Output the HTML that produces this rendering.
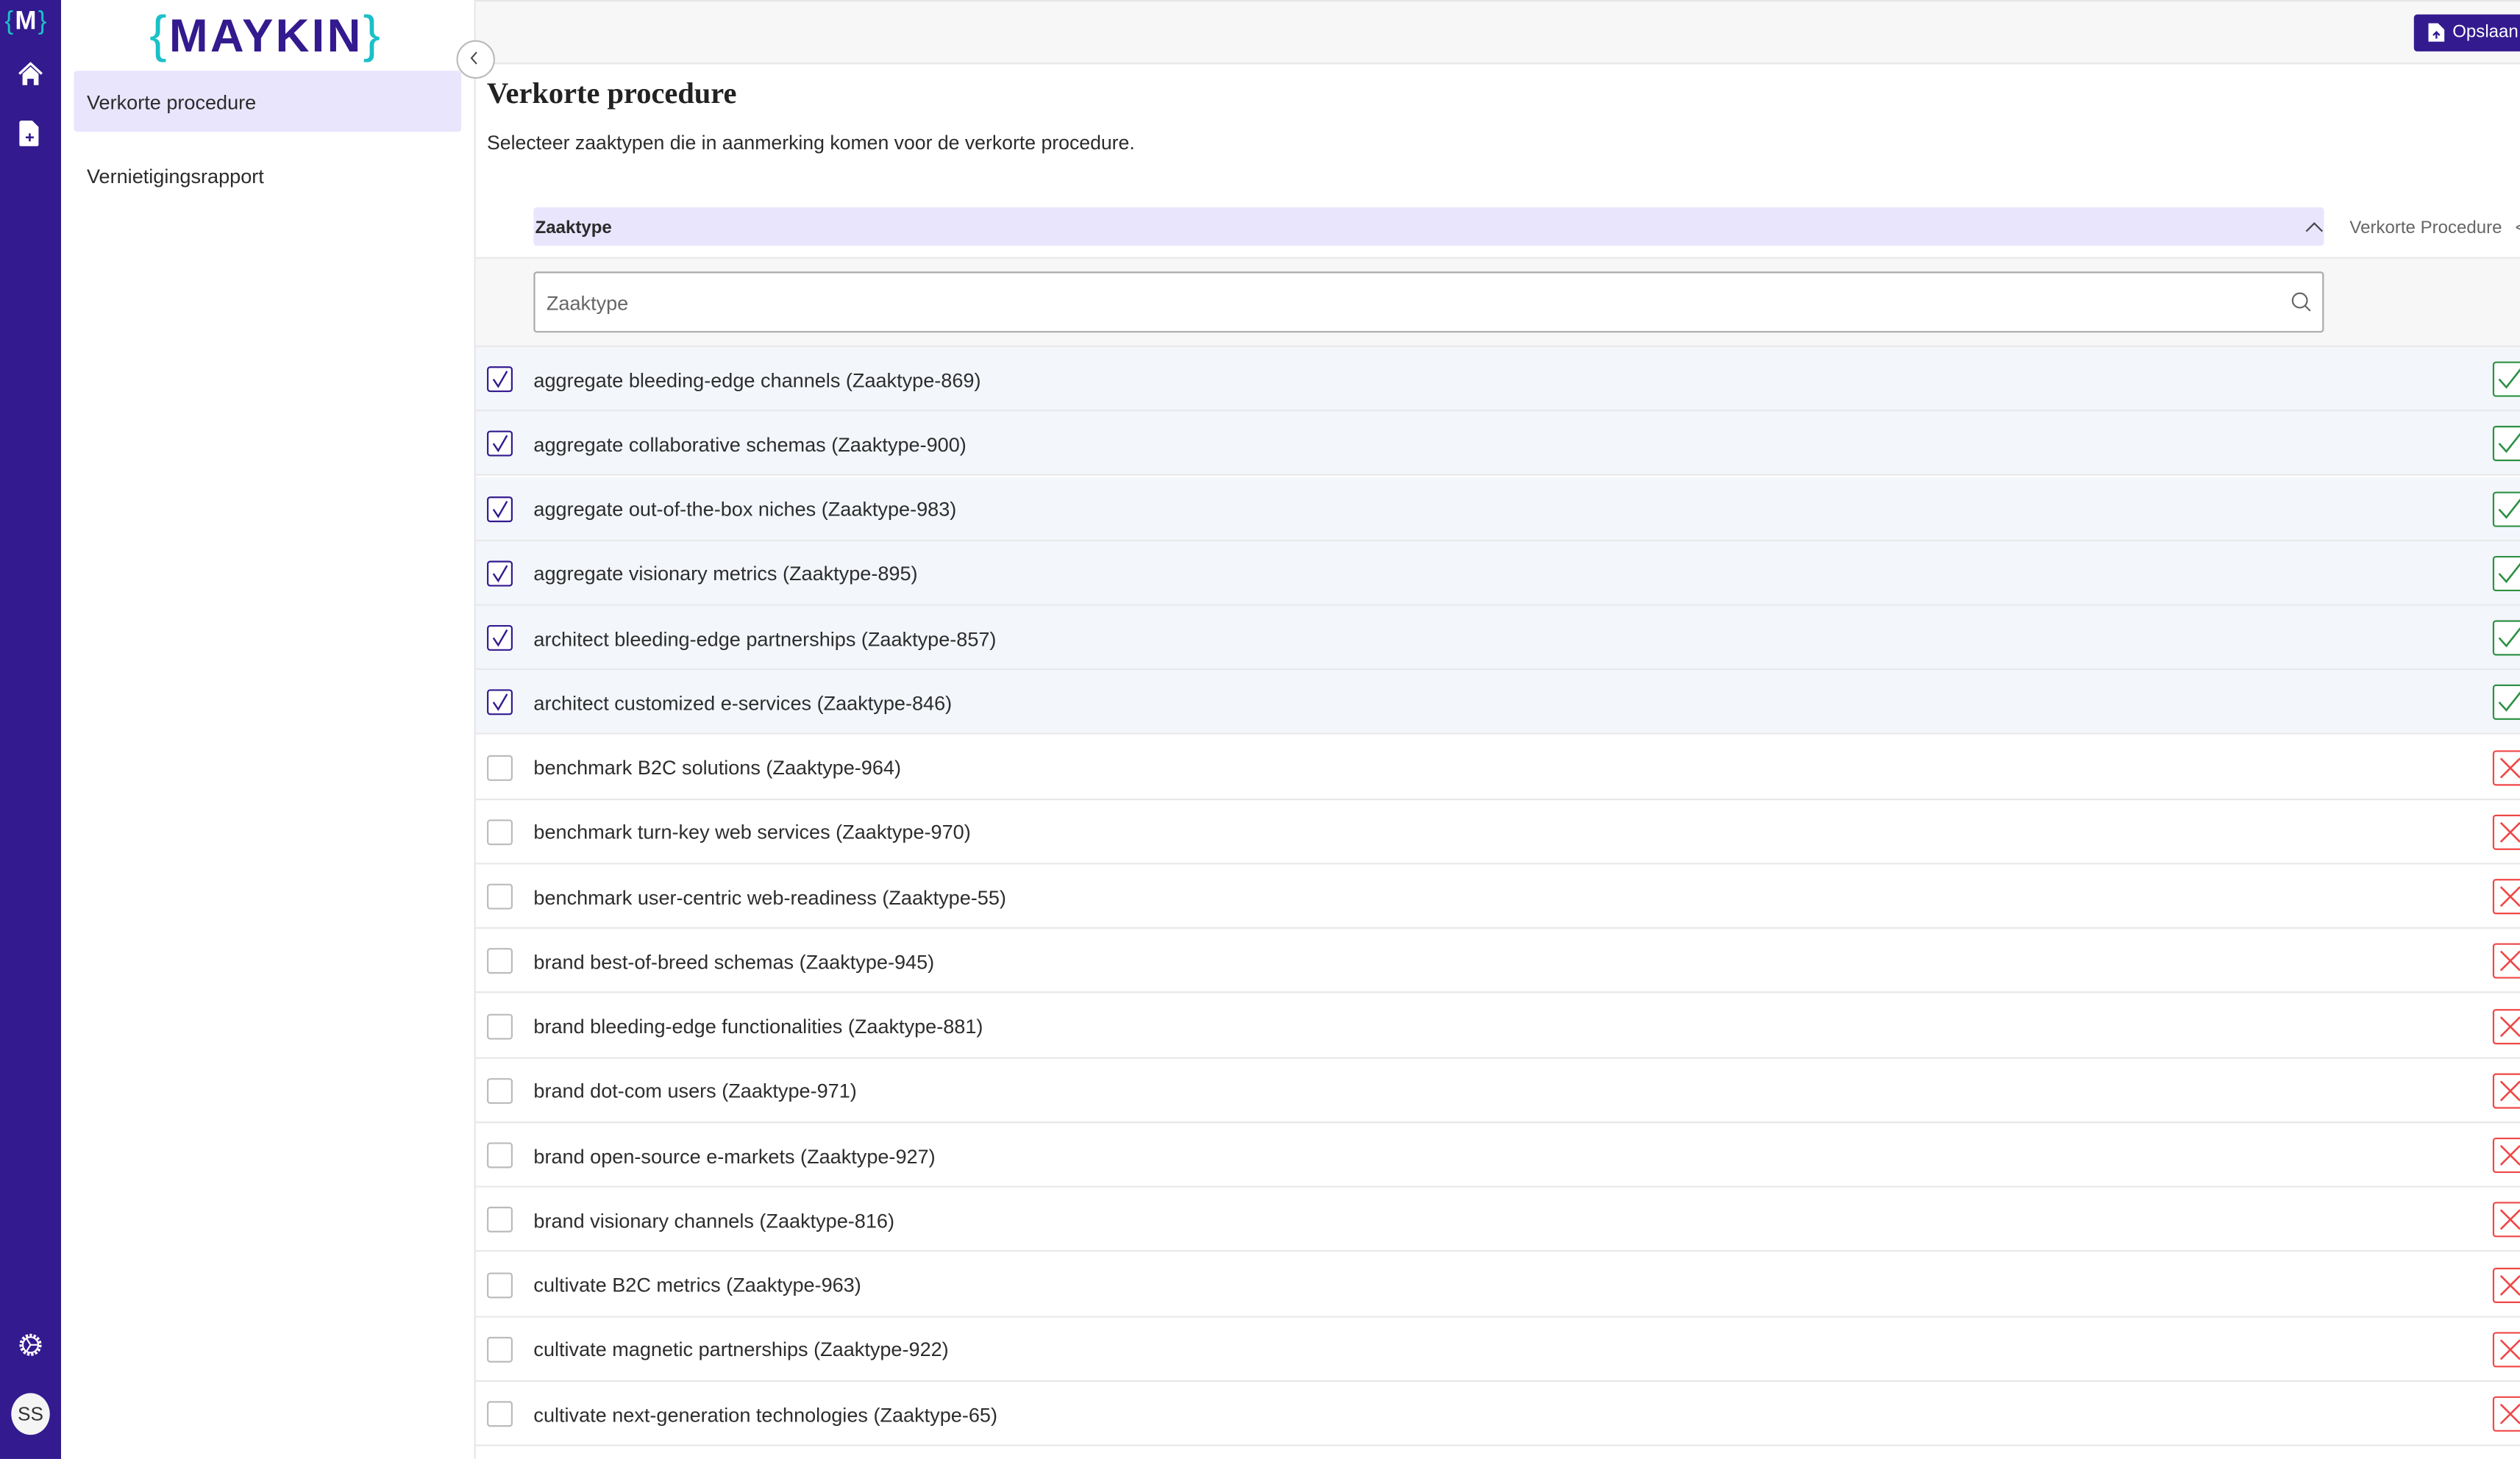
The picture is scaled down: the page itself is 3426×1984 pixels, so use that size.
<!DOCTYPE html>
<html><head><meta charset="utf-8"><style>
*{box-sizing:border-box;margin:0;padding:0}
html,body{width:3426px;height:1984px;overflow:hidden;background:#fff}
#w{position:absolute;left:0;top:0;width:1568px;height:908px;transform:scale(2.18495);transform-origin:0 0;font-family:"Liberation Sans",sans-serif;color:#2b2b2b}
.abs{position:absolute}
#nav{left:0;top:0;width:38px;height:908px;background:#331a8e}
#side{left:38px;top:0;width:257px;height:908px;background:#fff}
#main{left:295px;top:0;width:1273px;height:908px;border-left:1px solid #e6e6e6}
.row{position:absolute;left:0;width:1273px;height:40.2px;border-bottom:1px solid #e8e8e8}
.row.sel{background:#f3f6fb}
.cb{position:absolute;left:7px;top:12px;width:16px;height:16px;border:1px solid #bbb;border-radius:2px;background:#fff}
.sel .cb{border:1px solid #331a8e}
.lbl{position:absolute;left:36px;top:13.5px;font-size:12.4px;white-space:nowrap;color:#2d2d2d}
.ic{position:absolute;left:1255px;top:9px;width:22px;height:22px;border-radius:2px;background:#fff}
</style></head><body><div id="w">
<div id="nav" class="abs">
 <div class="abs" style="left:3px;top:5px;font-size:16px;font-weight:bold;color:#fff;letter-spacing:1px"><span style="color:#1bc0c8;font-weight:normal">{</span>M<span style="color:#1bc0c8;font-weight:normal">}</span></div>
 <svg class="abs" style="left:11px;top:38px" width="16" height="16" viewBox="0 0 16 16"><path d="M1 8 L8 1.5 L15 8" fill="none" stroke="#fff" stroke-width="1.5"/><path d="M3 8 L8 3.5 L13 8 V15 H10 V11 H6 V15 H3Z" fill="#fff"/></svg>
 <svg class="abs" style="left:12px;top:75px" width="13" height="16" viewBox="0 0 13 16"><path d="M1 0 H8 L12 4 V15 a1 1 0 0 1 -1 1 H1 a1 1 0 0 1 -1 -1 V1Z" fill="#fff"/><path d="M6.5 8 v5 M4 10.5 h5" stroke="#331a8e" stroke-width="1.2"/></svg>
 <svg class="abs" style="left:11px;top:829px" width="16" height="16" viewBox="0 0 16 16"><circle cx="8" cy="8" r="6" fill="none" stroke="#fff" stroke-width="1.8" stroke-dasharray="1.5 1"/><circle cx="8" cy="8" r="4.8" fill="none" stroke="#fff" stroke-width="1"/><path d="M8 8 L13 8 M8 8 L5.5 4 M8 8 L5.5 12" stroke="#fff" stroke-width="1"/></svg>
 <div class="abs" style="left:7px;top:867px;width:24px;height:26px;border-radius:50%;background:#f5f5f5;color:#333;font-size:12px;text-align:center;line-height:26px">SS</div>
</div>
<div id="side" class="abs">
 <div class="abs" style="left:55px;top:3px;font-size:29px;font-weight:bold;color:#331a8e;letter-spacing:1.5px;line-height:36px"><span style="color:#1bc0c8;font-weight:normal;font-size:32px">{</span>MAYKIN<span style="color:#1bc0c8;font-weight:normal;font-size:32px">}</span></div>
 <div class="abs" style="left:8px;top:44px;width:241px;height:38px;background:#e9e5fd;border-radius:2px"></div>
 <div class="abs" style="left:16px;top:57px;font-size:12.4px">Verkorte procedure</div>
 <div class="abs" style="left:16px;top:103px;font-size:12.4px">Vernietigingsrapport</div>
</div>
<div id="main" class="abs">
 <div class="abs" style="left:0;top:0;width:1273px;height:40px;background:#f7f7f7;border-top:1px solid #e6e6e6;border-bottom:1px solid #e6e6e6"></div>
 <div class="abs" style="left:1206px;top:9px;width:70px;height:23px;background:#331a8e;border-radius:2px;color:#fff;font-size:11px;line-height:23px;padding-left:24px">Opslaan</div>
 <svg class="abs" style="left:1215px;top:14px" width="10" height="12" viewBox="0 0 10 12"><path d="M0 0.5 H6 L10 4.5 V12 H0Z" fill="#fff"/><path d="M5 10 V6 M3 8 L5 6 L7 8" stroke="#331a8e" stroke-width="1.1" fill="none"/></svg>
 <div class="abs" style="left:7px;top:49px;font-family:'Liberation Serif',serif;font-weight:bold;font-size:18.5px;color:#222">Verkorte procedure</div>
 <div class="abs" style="left:7px;top:82px;font-size:12.2px">Selecteer zaaktypen die in aanmerking komen voor de verkorte procedure.</div>
 <div class="abs" style="left:36px;top:129px;width:1114px;height:24px;background:#e9e5fd;border-radius:2px"></div>
 <div class="abs" style="left:37px;top:135.5px;font-size:11px;font-weight:bold">Zaaktype</div>
 <svg class="abs" style="left:1138px;top:137px" width="12" height="8" viewBox="0 0 12 8"><path d="M1 7 L6 2 L11 7" fill="none" stroke="#444" stroke-width="1"/></svg>
 <div class="abs" style="left:1166px;top:135.5px;font-size:11px;color:#666">Verkorte Procedure</div>
 <div class="abs" style="left:1269px;top:135.5px;font-size:11px;color:#666">&lt;</div>
 <div class="abs" style="left:0;top:160px;width:1273px;height:56px;background:#f7f7f7;border-top:1px solid #e8e8e8;border-bottom:1px solid #e8e8e8"></div>
 <div class="abs" style="left:36px;top:169px;width:1114px;height:38px;background:#fff;border:1px solid #aaa;border-radius:2px"></div>
 <div class="abs" style="left:44px;top:182px;font-size:12.4px;color:#666">Zaaktype</div>
 <svg class="abs" style="left:1129px;top:181px" width="14" height="14" viewBox="0 0 14 14"><circle cx="6" cy="6" r="4.5" fill="none" stroke="#666" stroke-width="1"/><path d="M9.2 9.2 L12.5 12.5" stroke="#666" stroke-width="1"/></svg>
 <div id="rows"></div>
</div>
</div>
<script>
var items=[["aggregate bleeding-edge channels (Zaaktype-869)",1],["aggregate collaborative schemas (Zaaktype-900)",1],["aggregate out-of-the-box niches (Zaaktype-983)",1],["aggregate visionary metrics (Zaaktype-895)",1],["architect bleeding-edge partnerships (Zaaktype-857)",1],["architect customized e-services (Zaaktype-846)",1],["benchmark B2C solutions (Zaaktype-964)",0],["benchmark turn-key web services (Zaaktype-970)",0],["benchmark user-centric web-readiness (Zaaktype-55)",0],["brand best-of-breed schemas (Zaaktype-945)",0],["brand bleeding-edge functionalities (Zaaktype-881)",0],["brand dot-com users (Zaaktype-971)",0],["brand open-source e-markets (Zaaktype-927)",0],["brand visionary channels (Zaaktype-816)",0],["cultivate B2C metrics (Zaaktype-963)",0],["cultivate magnetic partnerships (Zaaktype-922)",0],["cultivate next-generation technologies (Zaaktype-65)",0]];
var h="";
items.forEach(function(it,i){
 var top=216+i*40.25;
 var s=it[1];
 h+='<div class="row'+(s?' sel':'')+'" style="top:'+top+'px"><div class="cb">'+(s?'<svg width="14" height="14" viewBox="0 0 14 14" style="position:absolute;left:0;top:0"><path d="M3 7 L6 11.5 L11.5 2" fill="none" stroke="#331a8e" stroke-width="1.1"/></svg>':'')+'</div><div class="lbl">'+it[0]+'</div>'+
 '<div class="ic" style="border:1px solid '+(s?'#2e9144':'#f04747')+'">'+(s?'<svg width="20" height="20" viewBox="0 0 20 20"><path d="M3 10 L7.5 15 L17 3" fill="none" stroke="#2e9144" stroke-width="1.2"/></svg>':'<svg width="20" height="20" viewBox="0 0 20 20"><path d="M4 4 L16 16 M16 4 L4 16" fill="none" stroke="#f04747" stroke-width="1.2"/></svg>')+'</div></div>';
});
document.getElementById("rows").innerHTML=h;
</script>
<style>#w::after{content:"";position:absolute;left:284px;top:25px;width:22px;height:22px;border-radius:50%;border:1px solid #bbb;background:#fff}</style>
<svg style="position:absolute;left:638px;top:67px;z-index:5" width="14" height="24" viewBox="0 0 14 24"><path d="M10 4 L3 12 L10 20" fill="none" stroke="#444" stroke-width="2"/></svg>
</body></html>
